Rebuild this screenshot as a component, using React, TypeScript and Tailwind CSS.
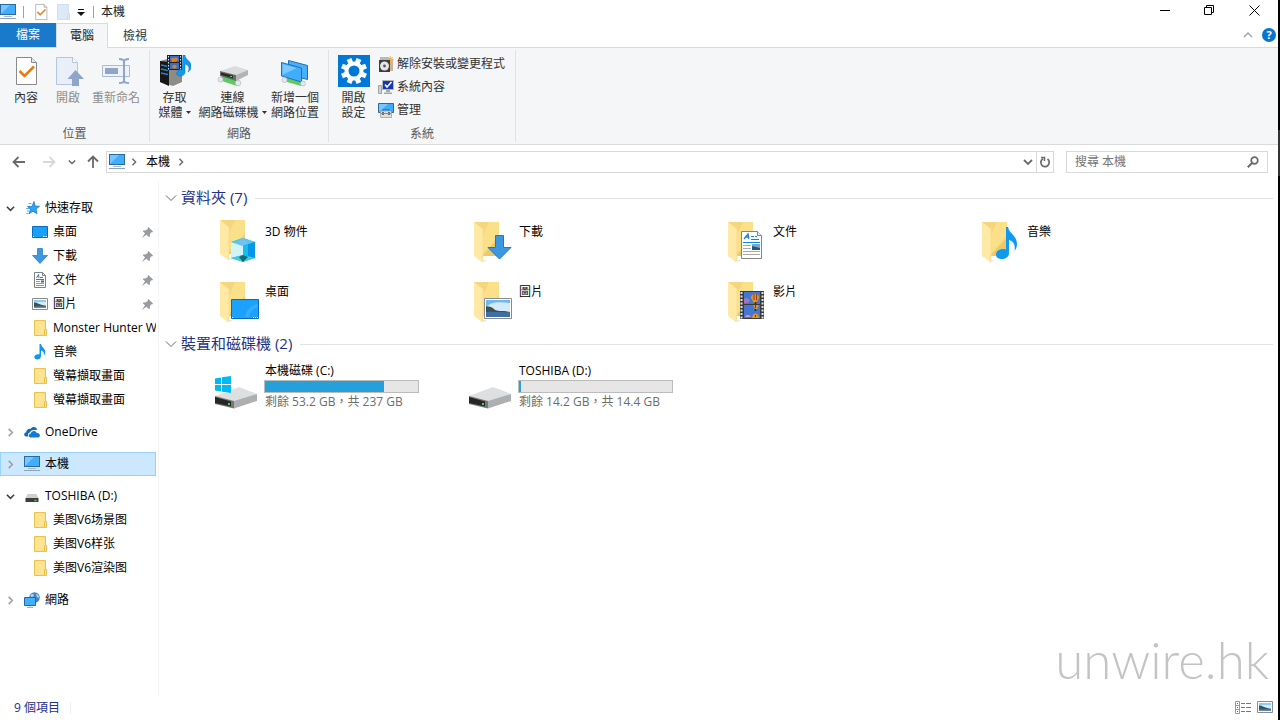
import React from 'react';

type IconProps = { className?: string };

const MonitorIcon = ({ className = 'size-4' }: IconProps) => (
  <svg viewBox="0 0 16 16" className={className} aria-hidden="true">
    <rect x="0.5" y="0.5" width="15" height="10" fill="#41adff" stroke="#2b6a9c" />
    <path d="M1 10V1h9z" fill="#78c6ff" />
    <path d="M4 12.5h8" stroke="#a9bccb" />
    <path d="M0 14.5h16" stroke="#8fa3bd" />
  </svg>
);

const CheckDocIcon = ({ className = 'size-8' }: IconProps) => (
  <svg viewBox="0 0 32 32" className={className} aria-hidden="true">
    <path d="M6.5 2.5h15l5 5v22h-20z" fill="#fff" stroke="#8a8a8a" />
    <path d="M21.5 2.5v5h5" fill="#e8e8e8" stroke="#8a8a8a" />
    <path d="m9.5 16 5 5L24 11.5" fill="none" stroke="#e87a10" strokeWidth="2.6" />
  </svg>
);

const OpenIcon = () => (
  <svg viewBox="0 0 32 32" className="size-8" aria-hidden="true">
    <path d="M4.5 2.5h16l5 5v22h-21z" fill="#e8eff9" stroke="#b3c6de" />
    <path d="M20.5 2.5v5h5" fill="#f7faff" stroke="#b3c6de" />
    <path d="M23.5 15 32 24h-5v7h-7v-7h-4.5z" fill="#8fa6ca" />
  </svg>
);

const RenameIcon = () => (
  <svg viewBox="0 0 32 32" className="size-8" aria-hidden="true">
    <path d="M2.500 10.500h27v11h-27z" fill="#eef3fa" stroke="#a9bbd5" />
    <path d="M5 13h13v6H5z" fill="#8fa6ca" />
    <path d="M19 4c3.5 0 5 .5 5 2.500v19c0 2-1.500 2.500-5 2.500M29 4c-3.500 0-5 .5-5 2.500v19c0 2 1.500 2.500 5 2.500" fill="none" stroke="#8fa6ca" strokeWidth="2" />
  </svg>
);

const MediaIcon = () => (
  <svg viewBox="0 0 32 32" className="size-8" aria-hidden="true">
    <path d="m1 6 11-3 11 3v21l-9 4L1 27z" fill="#8d8c86" />
    <path d="m1 6 9 1v24l-9-4z" fill="#171717" />
    <path d="m2 10 7 1.500M2 14l7 1.500M2 18l7 1.500" stroke="#1d83d6" strokeWidth="1.500" />
    <path d="M8 0h15v15H8z" fill="#222" />
    <path d="M11 1h9v6h-9zM11 8h9v6h-9z" fill="#3b70c8" />
    <path d="M12 4c1-2 3 0 4-1s3 0 3 2l-3 2h-3zM13 12c1-3 4-2 5-1l-2 3z" fill="#d98224" />
    <path d="M9.500 1v14M21.500 1v14" stroke="#e4e4e4" strokeDasharray="1.500 1.500" />
    <path d="M24 0h2c0 5 7 6 6 12-.3 3-1.500 4-3 5 2-4 1-7-3-8v8c0 3-3 4-5 4-3 0-4-2-3-4s3-3 5-2z" fill="#0d9af0" stroke="#0670c4" strokeWidth=".5" />
  </svg>
);

const NetDriveIcon = () => (
  <svg viewBox="0 0 32 32" className="size-8" aria-hidden="true">
    <path d="m4 22 4-1 14 5-2 5-15-5z" fill="#5ccc5f" />
    <circle cx="3.500" cy="24.500" r="2.500" fill="#e6e9ea" stroke="#b3b8bb" strokeWidth=".7" />
    <circle cx="21" cy="28" r="2.800" fill="#e6e9ea" stroke="#b3b8bb" strokeWidth=".7" />
    <path d="m3 16 15-5 13 4-12 5z" fill="#dcdcdd" />
    <path d="m3 16 16 4v6L3 21z" fill="#6b6b6b" />
    <path d="m19 20 12-5v5l-12 6z" fill="#b4b4b4" />
    <path d="m4 17.500 12 3v3L4 20z" fill="#2a2a2a" />
    <path d="M13 21.500h2" stroke="#4de05a" />
  </svg>
);

const NetPlaceIcon = () => (
  <svg viewBox="0 0 32 32" className="size-8" aria-hidden="true">
    <path d="m8 22 15 4-1 5-14-4z" fill="#5ccc5f" />
    <path d="m9.500 5.500 19 5v14l-19-5z" fill="#48b0ff" stroke="#276fab" />
    <path d="m2.500 7.500 20 5.500v14l-20-6z" fill="#41adff" stroke="#276fab" />
    <path d="m3.500 9 14 4-14 7z" fill="#7cc8ff" />
    <circle cx="5.500" cy="25" r="2.500" fill="#e6e9ea" stroke="#b3b8bb" strokeWidth=".7" />
    <circle cx="24" cy="28.500" r="2.500" fill="#e6e9ea" stroke="#b3b8bb" strokeWidth=".7" />
  </svg>
);

const GearIcon = () => (
  <svg viewBox="0 0 32 32" className="size-8" aria-hidden="true">
    <path d="M0 0h32v32H0z" fill="#0078d7" />
    <circle cx="16" cy="16" r="7.500" fill="none" stroke="#fff" strokeWidth="4" />
    {[22.5, 67.5, 112.5, 157.5, 202.5, 247.5, 292.5, 337.5].map((angle) => (
      <path key={angle} d="M13.500 3h5v5.500h-5z" fill="#fff" transform={`rotate(${angle} 16 16)`} />
    ))}
  </svg>
);

const UninstallIcon = () => (
  <svg viewBox="0 0 16 16" className="size-4" aria-hidden="true">
    <path d="M2 1h9v4H2z" fill="#b9b9b6" />
    <path d="m10 1 5 2v12h-4z" fill="#cdb48f" />
    <path d="M12.500 0v7M9.500 3.500H16M10 1l5 5M15 1l-5 5" stroke="#f9b04a" strokeWidth=".8" />
    <path d="M1 4h11v12H1z" fill="#3d3d3d" />
    <circle cx="6.500" cy="10" r="4.500" fill="#e5e5e5" />
    <circle cx="6.500" cy="10" r="1.400" fill="#555" />
  </svg>
);

const SystemIcon = () => (
  <svg viewBox="0 0 16 16" className="size-4" aria-hidden="true">
    <path d="M.5 6.500h3v8h-3z" fill="#d0d0d0" stroke="#888" strokeWidth=".7" />
    <path d="M4.500 1.500h11v9h-11z" fill="#1436b8" stroke="#b5b5b5" />
    <path d="m7 5.500 2 2.500 4.500-5" fill="none" stroke="#fff" strokeWidth="1.500" />
    <path d="M8 11h4v2H8zM6 13.500h8v1.500H6z" fill="#a4a4a4" />
  </svg>
);

const ManageIcon = () => (
  <svg viewBox="0 0 16 16" className="size-4" aria-hidden="true">
    <path d="M.5 1.500h15v9H.5z" fill="#3dabff" stroke="#2b6a9c" />
    <path d="M1 10V2h9z" fill="#78c6ff" />
    <path d="M5 9V7.500h6V9" fill="none" stroke="#6a6a6a" />
    <path d="M2.500 9h11v6.500h-11z" fill="#dedede" stroke="#888" strokeWidth=".6" />
    <path d="M5 10v3M11 10v3" stroke="#444" strokeWidth="1.500" />
    <path d="M3 11.500h10" stroke="#888" />
  </svg>
);

const ChevronIcon = ({ className = 'size-[10px]' }: IconProps) => (
  <svg viewBox="0 0 10 10" className={`shrink-0 ${className}`} aria-hidden="true">
    <path d="m1 3 4 4 4-4" fill="none" stroke="currentColor" strokeWidth="1.800" />
  </svg>
);

const CaretIcon = () => (
  <svg viewBox="0 0 5 3" className="h-[3px] w-[5px] shrink-0" aria-hidden="true">
    <path d="M0 0h5L2.500 3z" fill="#333" />
  </svg>
);

const PinIcon = () => (
  <svg viewBox="0 0 12 12" className="size-[11px] shrink-0" aria-hidden="true">
    <path d="m7 0 5 5-1 1-1-.3L8.500 8l.2 2.500-1.200.5L4.800 8.500.8 11.500l-.5-.4 3-4L1 4.700l.7-1.200 2.300.2L6.500 2 6 1z" fill="#969ba0" />
  </svg>
);

const StarIcon = () => (
  <svg viewBox="0 0 16 16" className="size-4" aria-hidden="true">
    <path d="m10 1.500 1 4.500 4.500.3L12 9l1 4.700-4-2.500-4 2.500 1.500-4.500L3.500 6.500H8z" fill="#2ba4f5" stroke="#1879c9" strokeWidth=".8" />
    <path d="M4.500 3.500h3M2 8.500h3M3 11h2M2.500 13.500h2" stroke="#53b5f5" />
  </svg>
);

const DesktopIcon = () => (
  <svg viewBox="0 0 16 16" className="size-4" aria-hidden="true">
    <path d="M.5 2.500h15v11H.5z" fill="#18a0fb" stroke="#0a6cb8" />
    <path d="M1 12.500h1M11 12.500h4" stroke="#fff" strokeDasharray="1 .5" />
  </svg>
);

const DownloadIcon = () => (
  <svg viewBox="0 0 16 16" className="size-4" aria-hidden="true">
    <path d="M5.500.5h5v7h5L8 15.500.5 7.500h5z" fill="#3d96e0" stroke="#2576bd" strokeWidth=".7" />
  </svg>
);

const DocIcon = () => (
  <svg viewBox="0 0 16 16" className="size-4" aria-hidden="true">
    <path d="M2.500.5h8l3 3v12h-11z" fill="#fff" stroke="#808080" />
    <path d="M10.500.5v3h3" fill="none" stroke="#808080" />
    <path d="m4.500 6 2-3.500.5 3.500M8 5.500h3" fill="none" stroke="#1a85d6" />
    <path d="M4 7.500h8" stroke="#1a85d6" />
    <path d="M4 9.500h4M4 11.500h8M4 13.500h8" stroke="#999" />
    <path d="M9 8.500h3v2H9z" fill="#34699a" />
  </svg>
);

const PictureIcon = () => (
  <svg viewBox="0 0 16 16" className="size-4" aria-hidden="true">
    <path d="M.5 2.500h15v11H.5z" fill="#fff" stroke="#8b8b8b" />
    <path d="M2 4h12v8H2z" fill="#8fcbf8" />
    <path d="M5 6h9v3H5z" fill="#d8edfa" />
    <path d="M2 6.500c4 .5 6 2.500 12 3.500v1H2z" fill="#3b5553" />
    <path d="M2 10.500h12V12H2z" fill="#5c8dbb" />
  </svg>
);

const SmallFolderIcon = () => (
  <svg viewBox="0 0 16 16" className="size-4" aria-hidden="true">
    <path d="M2.500.5h11v15h-11z" fill="#ffe391" stroke="#e8c24c" />
    <path d="M12.500 9.500h2v6h-2z" fill="#ffe391" stroke="#e8c24c" />
  </svg>
);

const MusicIcon = () => (
  <svg viewBox="0 0 16 16" className="size-4" aria-hidden="true">
    <path d="M7.500 0h1.500c.3 3 4.500 4.500 4.300 8-.1 2-.8 3-1.500 3.500.5-3-.5-4.500-2.800-5V12c0 2.500-2 3.500-3.800 3.500S2.300 14.500 2.300 13c0-2 2.700-3.300 5.200-2.700z" fill="#0f97ee" />
  </svg>
);

const CloudIcon = () => (
  <svg viewBox="0 0 16 16" className="size-4" aria-hidden="true">
    <path d="M4.500 12.500H2C-.5 12-.3 8.500 2.200 8.200 2.300 5.500 5 4.300 6.500 5c2-3 6-2.300 6.700.8L10 6C7 6 6 8 6 8.500 4 9 3.500 11 4.500 12.500z" fill="#0f6cbd" />
    <path d="M6.500 13.500C4 13 4.300 9.800 6.800 9.500 7.200 6.500 11.500 6 12.700 9c3.600-.3 4.300 3.700 1.500 4.500z" fill="#0f7bd8" />
  </svg>
);

const SmallDriveIcon = () => (
  <svg viewBox="0 0 16 16" className="size-4" aria-hidden="true">
    <path d="M3.500 6h9l2 4.500h-13z" fill="#cfcfcf" />
    <path d="M1.500 10h13v4h-13z" fill="#3e3e3e" />
    <path d="M10.500 12.500h2" stroke="#3ddc4e" strokeWidth="1.500" />
  </svg>
);

const NetworkIcon = () => (
  <svg viewBox="0 0 16 16" className="size-4" aria-hidden="true">
    <circle cx="10.500" cy="5.500" r="5.300" fill="#4584c4" />
    <path d="M6.500 3c2-2 4-1 3 1.500L7 5zM12 2c2 0 3 2 3 4l-2-1z" fill="#b5d8f2" />
    <path d="M.5 5.500h11v8H.5z" fill="#43b0ff" stroke="#22689f" />
    <path d="M6 14v1.500M3 15.500h6" stroke="#a8b4be" />
  </svg>
);

// Large folder, 48x48, with the content glyph drawn over its lower right corner
const Folder = ({ children, raised }: { children: React.ReactNode; raised?: boolean }) => (
  <svg viewBox="0 0 48 48" className="size-12 shrink-0" aria-hidden="true">
    <g transform={raised ? 'translate(0 -2)' : undefined}>
      <path d="M7 4h25v34H14z" fill="#f5d67c" />
      <path d="M22 4h10v13L14 38V22z" fill="#fbe08a" />
      <path d="M15 38 32 20v18z" fill="#ecc868" />
      <path d="m7 4 9 7v26l-1 7-8-6z" fill="#ffe9a5" />
      <path d="M16 11v26l-1 7" fill="none" stroke="#f8dd8d" />
      <path d="M15 44c2 0 4-1 5-2h-4z" fill="#e7e7e7" />
    </g>
    {children}
  </svg>
);

const CubeGlyph = () => (
  <>
    <path d="m18 24 12-4 12 4v16l-12 4-12-4z" fill="#1cb5ea" />
    <path d="m18 24 12-4 12 4-12 4z" fill="#52c8ea" />
    <path d="m30 20 5 5-5 3-5-3z" fill="#79bdf5" />
    <path d="m18 24 12 4v9l-12 3z" fill="#d3f4f7" />
    <path d="m30 28 12-4v16l-12-3z" fill="#0596ea" />
    <path d="m30 28 5-2v12l-5-1z" fill="#12bff0" />
    <path d="m18 40 12-3 12 3-12 4z" fill="#43cadb" />
    <path d="m30 37 5 2-5 5-4-5z" fill="#0b6f76" />
  </>
);

const DownGlyph = () => (
  <path d="M28.500 17.500h8v12h7.500L32.500 41 21 29.500h7.500z" fill="#3d96e0" stroke="#2576bd" />
);

const DocGlyph = () => (
  <>
    <path d="M20.500 13.500h16l4 4v23h-20z" fill="#fff" stroke="#858585" />
    <path d="M36.500 13.500v4h4" fill="#eee" stroke="#858585" />
    <path d="m23 21 4-5 1 5m-4-2h4" fill="none" stroke="#1683d8" strokeWidth="1.300" />
    <path d="M30 18.500h3m1 0h2M30 21.500h8M22 24.500h17" stroke="#1683d8" />
    <path d="M22 27.500h8M22 30.500h8M22 33.500h17M22 36.500h17" stroke="#aaa" />
    <path d="M31 26h8v6h-8z" fill="#6baedb" />
    <path d="m31 28 8 2v2h-8z" fill="#35536b" />
  </>
);

const MusicGlyph = () => (
  <path d="M31 9h2c.5 6 9 8.500 9 17 0 3-1 5-2.500 7 1-6-1-10-5.500-11v13c0 4-3.500 6-7 6s-6-1.500-6-4.500c0-4 5-6.500 10-5z" fill="#0f9af0" />
);

const DesktopGlyph = () => (
  <>
    <path d="M18.500 21.500h27v19h-27z" fill="#1ba1ff" stroke="#0b6bb5" />
    <path d="M32 39c1-7 6-12 13-13v3c-5 1-8 5-9 10z" fill="#35adff" />
    <path d="M19 39.500h1M40 39.500h1m1 0h1m1 0h1" stroke="#fff" />
  </>
);

const PictureGlyph = () => (
  <>
    <path d="M17.500 20.500h27v20h-27z" fill="#fff" stroke="#8b8b8b" />
    <path d="M19 22h24v17H19z" fill="#6db8f5" />
    <path d="M19 29c6-6 14-5 24-4v9H19z" fill="#d3eafa" />
    <path d="M19 28c3 1 5 0 8 3s8 1 16 3v2H19z" fill="#3b5152" />
    <path d="M19 34c8-1 16 1 24 0v5H19z" fill="#3f70a3" />
  </>
);

const VideoGlyph = () => (
  <>
    <path d="M19 13h24v28H19z" fill="#3a3a3a" />
    <path d="M20.500 14v27M41.500 14v27" stroke="#e3e3e3" strokeWidth="2" strokeDasharray="2 1.500" />
    <path d="M23 14h16v12H23zM23 27h16v13H23z" fill="#4377d2" />
    <path d="M30 20a4 4 0 1 1 8 0l-3 5h-2z" fill="#e99224" />
    <path d="M33 16v6M35.500 16v6" stroke="#9c3b17" />
    <path d="M23 21c2-2 4-1 6 1l-2 3h-4z" fill="#a477ba" />
    <path d="M32 27h6l-2 4h-2zM31 40c0-6 7-6 7 0z" fill="#e99224" />
    <path d="M34.500 27v3M34.500 37v2" stroke="#6b2950" />
    <path d="M24 39c1-3 4-3 6 0z" fill="#c598bd" />
    <path d="M34.500 24v2m0 5v2" stroke="#312418" strokeWidth="1.500" />
  </>
);

const DriveIcon = ({ windows }: { windows?: boolean }) => (
  <svg viewBox="0 0 48 48" className="size-12 shrink-0" aria-hidden="true">
    <path d="M2 34 26 25l18 7-23 8z" fill="#dedfe1" />
    <path d="m2 34 19 5v7.500L2 42z" fill="#777" />
    <path d="m21 39 23-7v7l-23 7.500z" fill="#aeafb1" />
    <path d="m2 35 16 4.500v5L2 41z" fill="#262626" />
    <path d="M16 41v2" stroke="#39e04a" strokeWidth="2" />
    {windows && (
      <>
        <path d="M2 14h17v17H2z" fill="#fff" />
        <path d="m2 16.500 6-1V22H2zM9 15.300l9-1.300v8H9zM2 23h6v6.500l-6-1zM9 23h9v8l-9-1.300z" fill="#00b9f2" />
      </>
    )}
  </svg>
);

interface TreeItem {
  label: string;
  icon: React.ReactNode;
  pinned?: boolean;
}

interface TreeGroup extends TreeItem {
  open?: boolean;
  selected?: boolean;
  items?: TreeItem[];
}

const tree: TreeGroup[] = [
  {
    label: '快速存取',
    icon: <StarIcon />,
    open: true,
    items: [
      { label: '桌面', icon: <DesktopIcon />, pinned: true },
      { label: '下載', icon: <DownloadIcon />, pinned: true },
      { label: '文件', icon: <DocIcon />, pinned: true },
      { label: '圖片', icon: <PictureIcon />, pinned: true },
      { label: 'Monster Hunter W', icon: <SmallFolderIcon /> },
      { label: '音樂', icon: <MusicIcon /> },
      { label: '螢幕擷取畫面', icon: <SmallFolderIcon /> },
      { label: '螢幕擷取畫面', icon: <SmallFolderIcon /> },
    ],
  },
  { label: 'OneDrive', icon: <CloudIcon /> },
  { label: '本機', icon: <MonitorIcon />, selected: true },
  {
    label: 'TOSHIBA (D:)',
    icon: <SmallDriveIcon />,
    open: true,
    items: [
      { label: '美图V6场景图', icon: <SmallFolderIcon /> },
      { label: '美图V6样张', icon: <SmallFolderIcon /> },
      { label: '美图V6渲染图', icon: <SmallFolderIcon /> },
    ],
  },
  { label: '網路', icon: <NetworkIcon /> },
];

const folders = [
  { label: '3D 物件', glyph: <CubeGlyph />, raised: true },
  { label: '下載', glyph: <DownGlyph /> },
  { label: '文件', glyph: <DocGlyph /> },
  { label: '音樂', glyph: <MusicGlyph /> },
  { label: '桌面', glyph: <DesktopGlyph /> },
  { label: '圖片', glyph: <PictureGlyph /> },
  { label: '影片', glyph: <VideoGlyph /> },
];

const drives = [
  { label: '本機磁碟 (C:)', detail: '剩餘 53.2 GB，共 237 GB', free: 53.2, total: 237, windows: true },
  { label: 'TOSHIBA (D:)', detail: '剩餘 14.2 GB，共 14.4 GB', free: 14.2, total: 14.4 },
];

const TitleBar = () => (
  <header className="flex h-[23px] items-center">
    <MonitorIcon />
    <span className="ml-[7px] h-3 w-px bg-gray-400" />
    <button type="button" aria-label="內容" className="ml-2">
      <CheckDocIcon className="size-[18px]" />
    </button>
    <button type="button" aria-label="新增資料夾" disabled className="ml-1">
      <svg viewBox="0 0 18 18" className="size-[18px]" aria-hidden="true">
        <path d="M3.500 1.500h11v15h-11z" fill="#dce9f7" stroke="#cfdff0" />
        <path d="M13.500 10.500h2v6h-2z" fill="#dce9f7" stroke="#cfdff0" />
      </svg>
    </button>
    <button type="button" aria-label="自訂快速存取工具列" className="ml-[5px]">
      <svg viewBox="0 0 8 8" className="size-2" aria-hidden="true">
        <path d="M1 1.500h6" stroke="#111" />
        <path d="M0 4h8L4 8z" fill="#111" />
      </svg>
    </button>
    <span className="ml-2 h-3 w-px bg-gray-400" />
    <h1 className="ml-[7px] text-xs">本機</h1>
    <div className="ml-auto flex self-start pr-px text-black">
      <button type="button" aria-label="最小化" className="flex h-[21px] w-[46px] items-center justify-center">
        <svg viewBox="0 0 11 11" className="size-[11px]" aria-hidden="true">
          <path d="M1 5.500h10" stroke="currentColor" />
        </svg>
      </button>
      <button type="button" aria-label="往下還原" className="flex h-[21px] w-[45px] items-center justify-center">
        <svg viewBox="0 0 11 11" className="size-[11px]" aria-hidden="true">
          <path d="M.5 2.500h7v7h-7zM2.500 2.500v-2h7v7h-2" fill="none" stroke="currentColor" />
        </svg>
      </button>
      <button type="button" aria-label="關閉" className="flex h-[21px] w-[45px] items-center justify-center">
        <svg viewBox="0 0 11 11" className="size-[11px]" aria-hidden="true">
          <path d="m.5.500 10 10m0-10-10 10" stroke="currentColor" />
        </svg>
      </button>
    </div>
  </header>
);

const RibbonTabs = () => (
  <nav className="relative z-10 -mb-px flex h-[25px] items-stretch text-xs">
    <button type="button" className="mb-px w-14 bg-[#1979ca] text-white">檔案</button>
    <button type="button" className="w-[52px] border border-b-0 border-[#dadbdc] bg-[#f5f6f7] text-[#222]">電腦</button>
    <button type="button" className="w-[54px] text-[#333]">檢視</button>
    <div className="mb-[2px] ml-auto flex items-center gap-[9px] pr-[2px]">
      <button type="button" aria-label="最小化功能區" className="text-gray-400">
        <svg viewBox="0 0 10 10" className="size-[10px]" aria-hidden="true">
          <path d="m1 7 4-4 4 4" fill="none" stroke="currentColor" strokeWidth="1.300" />
        </svg>
      </button>
      <button type="button" aria-label="說明" className="flex size-[14px] items-center justify-center rounded-full bg-[#0a74cf] text-[11px] leading-[14px] font-bold text-white">
        ?
      </button>
    </div>
  </nav>
);

interface RibbonButtonProps {
  icon: React.ReactNode;
  lines: string[];
  menu?: boolean;
  disabled?: boolean;
  className: string;
}

const RibbonButton: React.FC<RibbonButtonProps> = ({ icon, lines, menu, disabled, className }) => (
  <button type="button" disabled={disabled} className={`flex flex-col items-center disabled:text-[#8e8e8e] ${className}`}>
    {icon}
    <span className="mt-[3px] flex flex-col items-center leading-[15px] whitespace-nowrap">
      {lines.map((line, i) => (
        <span key={line} className="flex items-center gap-[3px]">
          {line}
          {menu && i === lines.length - 1 && <CaretIcon />}
        </span>
      ))}
    </span>
  </button>
);

const RibbonGroup = ({ label, children }: { label: string; children: React.ReactNode }) => (
  <section className="my-[2px] flex flex-col border-r border-[#e1e2e3]">
    <div className="flex flex-1 items-start pt-[5px]">{children}</div>
    <h2 className="text-center leading-4 text-[#5a5a5a]">{label}</h2>
  </section>
);

const Ribbon = () => (
  <div className="flex h-[98px] border-y border-[#dadbdc] bg-[#f5f6f7] text-xs text-[#333]">
    <RibbonGroup label="位置">
      <RibbonButton icon={<CheckDocIcon />} lines={['內容']} className="ml-[6px] w-10" />
      <RibbonButton icon={<OpenIcon />} lines={['開啟']} disabled className="ml-[2px] w-10" />
      <RibbonButton icon={<RenameIcon />} lines={['重新命名']} disabled className="mr-[5px] w-14" />
    </RibbonGroup>
    <RibbonGroup label="網路">
      <RibbonButton icon={<MediaIcon />} lines={['存取', '媒體']} menu className="ml-1 w-[41px]" />
      <RibbonButton icon={<NetDriveIcon />} lines={['連線', '網路磁碟機']} menu className="ml-px w-[73px]" />
      <RibbonButton icon={<NetPlaceIcon />} lines={['新增一個', '網路位置']} className="mr-2 ml-px w-[50px]" />
    </RibbonGroup>
    <RibbonGroup label="系統">
      <RibbonButton icon={<GearIcon />} lines={['開啟', '設定']} className="ml-1 w-[41px]" />
      <div className="mr-[10px] ml-1 flex flex-col items-start gap-[7px] pt-[1px]">
        <button type="button" className="flex h-4 items-center gap-[3px]"><UninstallIcon />解除安裝或變更程式</button>
        <button type="button" className="flex h-4 items-center gap-[3px]"><SystemIcon />系統內容</button>
        <button type="button" className="flex h-4 items-center gap-[3px]"><ManageIcon />管理</button>
      </div>
    </RibbonGroup>
  </div>
);

const ArrowIcon = ({ className = '' }: IconProps) => (
  <svg viewBox="0 0 14 14" className={`size-[14px] ${className}`} aria-hidden="true">
    <path d="M1.500 7H13M6.500 2 1.500 7l5 5" fill="none" stroke="currentColor" strokeWidth="1.800" />
  </svg>
);

const AddressRow = () => (
  <div className="mb-[2px] flex h-[34px] items-center pr-[10px] text-xs text-[#6a6a6a]">
    <button type="button" aria-label="上一頁" className="ml-3"><ArrowIcon /></button>
    <button type="button" aria-label="下一頁" disabled className="ml-4 text-[#d8d8d8]"><ArrowIcon className="rotate-180" /></button>
    <button type="button" aria-label="最近的位置" className="ml-3"><ChevronIcon className="size-2" /></button>
    <button type="button" aria-label="上一層" className="ml-[10px]"><ArrowIcon className="rotate-90" /></button>
    <div className="ml-[6px] flex h-[22px] flex-1 items-center border border-[#d9d9d9] bg-white pl-[2px]">
      <MonitorIcon />
      <ChevronIcon className="ml-[5px] size-2 -rotate-90" />
      <a href="#this-pc" className="ml-2 text-black">本機</a>
      <ChevronIcon className="ml-[7px] size-2 -rotate-90" />
      <button type="button" aria-label="先前的位置" className="mr-[3px] ml-auto"><ChevronIcon /></button>
      <button type="button" aria-label="重新整理" className="flex h-full w-[17px] items-center justify-center border-l border-[#d9d9d9]">
        <svg viewBox="0 0 12 12" className="size-3" aria-hidden="true">
          <path d="M8.500 3A4.200 4.200 0 1 1 4 2.700" fill="none" stroke="currentColor" strokeWidth="1.700" />
          <path d="M2 1.500h3.500V5" fill="none" stroke="currentColor" strokeWidth="1.500" />
        </svg>
      </button>
    </div>
    <label className="ml-3 flex h-[22px] w-[202px] items-center border border-[#d9d9d9] bg-white pr-2 pl-2">
      <input type="search" aria-label="搜尋 本機" placeholder="搜尋 本機" className="min-w-0 flex-1 outline-none placeholder:text-[#757575]" />
      <svg viewBox="0 0 12 12" className="size-3" aria-hidden="true">
        <circle cx="7.500" cy="4.500" r="3.300" fill="none" stroke="currentColor" strokeWidth="1.700" />
        <path d="M5 7 .8 11.200" stroke="currentColor" strokeWidth="2" />
      </svg>
    </label>
  </div>
);

const Sidebar = () => (
  <nav className="w-[159px] shrink-0 border-r border-[#f3f3f3] pt-[15px] pr-[2px] text-xs text-black">
    <ul className="flex flex-col gap-2">
      {tree.map((group) => (
        <li key={group.label}>
          <a
            href="#"
            className={`flex h-6 items-center border pl-[5px] ${group.selected ? 'border-[#99d1ff] bg-[#cce8ff]' : 'border-transparent'}`}
          >
            <ChevronIcon className={group.open ? 'size-[9px] text-[#404040]' : 'size-[9px] -rotate-90 text-[#a0a0a0]'} />
            <span className="mr-[5px] ml-[9px]">{group.icon}</span>
            {group.label}
          </a>
          {group.items && (
            <ul>
              {group.items.map((item, i) => (
                <li key={i}>
                  <a href="#" className="flex h-6 items-center overflow-hidden pr-[3px] pl-8">
                    <span className="mr-[5px] shrink-0">{item.icon}</span>
                    <span className="flex-1 whitespace-nowrap">{item.label}</span>
                    {item.pinned && <PinIcon />}
                  </a>
                </li>
              ))}
            </ul>
          )}
        </li>
      ))}
    </ul>
  </nav>
);

const SectionHeading = ({ children }: { children: React.ReactNode }) => (
  <h2 className="flex h-6 items-center pr-[5px] pl-[6px] text-[15px] text-[#1e3287]">
    <svg viewBox="0 0 12 12" className="mr-1 size-3" aria-hidden="true">
      <path d="m1 3.500 5 5 5-5" fill="none" stroke="#666" />
    </svg>
    <span className="pb-[2px]">{children}</span>
    <span className="ml-2 h-px flex-1 bg-[#e2e2e2]" />
  </h2>
);

const Content = () => (
  <main className="min-w-0 flex-1 pt-[5px] text-xs text-black">
    <SectionHeading>資料夾 (7)</SectionHeading>
    <ul className="grid grid-cols-[repeat(auto-fill,254px)] pt-[2px] pl-[54px]">
      {folders.map((folder) => (
        <li key={folder.label} className="flex h-[60px] gap-1 pt-[6px]">
          <Folder raised={folder.raised}>{folder.glyph}</Folder>
          <a href="#" className="self-start pt-[6px]">{folder.label}</a>
        </li>
      ))}
    </ul>
    <SectionHeading>裝置和磁碟機 (2)</SectionHeading>
    <ul className="grid grid-cols-[repeat(auto-fill,254px)] pl-[54px]">
      {drives.map((drive) => (
        <li key={drive.label} className="flex h-[60px] gap-[3px] pt-[6px]">
          <DriveIcon windows={drive.windows} />
          <div className="w-[155px]">
            <a href="#" className="block pl-[1px] leading-[18px]">{drive.label}</a>
            <div className="h-[13px] border border-[#bcbcbc] bg-[#e6e6e6]">
              <div className="h-full bg-[#26a0da]" style={{ width: `${(1 - drive.free / drive.total) * 100}%` }} />
            </div>
            <p className="pl-[1px] leading-[18px] whitespace-nowrap text-[#6d6d6d]">{drive.detail}</p>
          </div>
        </li>
      ))}
    </ul>
  </main>
);

const StatusBar = () => (
  <footer className="flex h-6 items-center pr-[5px] pl-[14px] text-xs text-[#1e3287]">
    <span>9 個項目</span>
    <span className="ml-[10px] h-3 w-px bg-[#ededed]" />
    <div className="mb-[2px] ml-auto flex items-center gap-[6px]">
      <button type="button" aria-label="詳細資料">
        <svg viewBox="0 0 16 13" className="h-[13px] w-4" aria-hidden="true">
          <path d="M.5.500h4v12h-4zM.5 4.500h4M.5 8.500h4" fill="#fff" stroke="#999" />
          <path d="M6 2.500h4m1 0h5M6 6.500h4m1 0h5M6 10.500h4m1 0h5" stroke="#777" />
          <path d="M2 2.500h1M2 6.500h1M2 10.500h1" stroke="#2f6da5" />
        </svg>
      </button>
      <button type="button" aria-label="大圖示"><PictureIcon /></button>
    </div>
  </footer>
);

const App: React.FC = () => (
  <div className="flex min-h-screen bg-white font-['Open_Sans','Noto_Sans_CJK_TC',sans-serif] text-[#222]">
    <div className="relative flex min-w-0 flex-1 flex-col">
      <TitleBar />
      <RibbonTabs />
      <Ribbon />
      <AddressRow />
      <div className="flex flex-1">
        <Sidebar />
        <Content />
      </div>
      <StatusBar />
      <div className="pointer-events-none absolute right-[9px] bottom-[30px] font-['Lato',sans-serif] text-[51px] leading-[60px] font-light text-[#c3c4c6]">
        unwire.hk
      </div>
    </div>
    <div className="flex w-[2px] flex-col bg-black">
      <div className="mt-[130px] h-[46px] bg-[#333]" />
    </div>
  </div>
);

export default App;
